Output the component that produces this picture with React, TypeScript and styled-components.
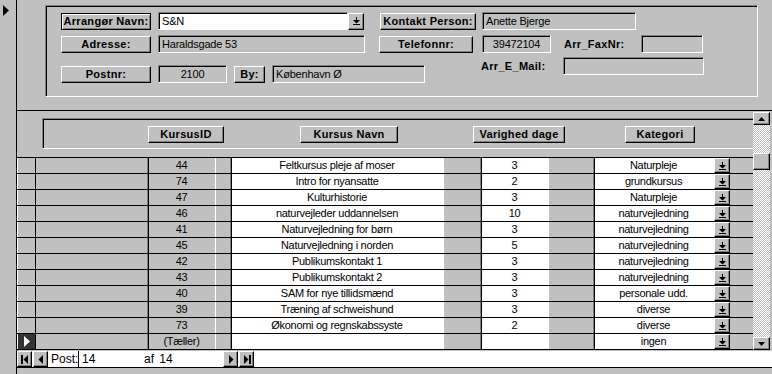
import React from 'react';
import styled, { createGlobalStyle } from 'styled-components';

const GlobalStyle = createGlobalStyle`
  html, body {
    margin: 0;
    padding: 0;
    background: #c0c0c0;
  }
  body {
    font-family: "Liberation Sans", Arial, sans-serif;
    font-size: 11px;
    color: #000;
  }
`;

const Window = styled.div`
  display: flex;
  width: 772px;
  height: 374px;
  overflow: hidden;
  background: #c0c0c0;
`;

const SelectorStrip = styled.div`
  width: 17px;
  flex: none;
  box-sizing: border-box;
  border-right: 1px solid #000;
  padding: 5px 0 0 3px;
`;

const Main = styled.div`
  flex: 1;
  display: flex;
  flex-direction: column;
`;

const HeaderSection = styled.div`
  height: 111px;
  box-sizing: border-box;
  border-bottom: 1px solid #000;
  padding: 5px 0 0 28px;
`;

const Frame = styled.div`
  width: 713px;
  height: 92px;
  box-sizing: border-box;
  border: 1px solid;
  border-color: #808080 #fff #fff #808080;
  box-shadow: inset 1px 1px 0 #000;
  padding: 6px 0 0 15px;
`;

const FormRow = styled.div<{ $mt?: number; $h?: number; $top?: boolean }>`
  display: flex;
  align-items: ${(p) => (p.$top ? 'flex-start' : 'center')};
  height: ${(p) => p.$h ?? 18}px;
  margin-top: ${(p) => p.$mt ?? 0}px;
`;

const Group = styled.div<{ $mt?: number }>`
  display: flex;
  align-items: center;
  height: 18px;
  margin-top: ${(p) => p.$mt ?? 0}px;
`;

const raised = `
  box-sizing: border-box;
  background: #c0c0c0;
  border: 1px solid;
  border-color: #fff #000 #000 #fff;
  box-shadow: inset -1px -1px 0 #808080;
`;

const LabelButton = styled.div<{ $w: number; $ml?: number; $focus?: boolean }>`
  ${raised}
  width: ${(p) => p.$w}px;
  height: 17px;
  margin-left: ${(p) => p.$ml ?? 0}px;
  font-weight: bold;
  letter-spacing: 0.3px;
  text-align: center;
  line-height: 15px;
  white-space: nowrap;
  ${(p) =>
    p.$focus &&
    `
    border-color: #000;
    box-shadow: inset 1px 1px 0 #fff, inset -1px -1px 0 #808080;
  `}
`;

const Field = styled.div<{ $w: number; $ml?: number; $white?: boolean; $center?: boolean }>`
  box-sizing: border-box;
  width: ${(p) => p.$w}px;
  height: 18px;
  margin-left: ${(p) => p.$ml ?? 0}px;
  background: ${(p) => (p.$white ? '#fff' : '#c0c0c0')};
  border: 1px solid;
  border-color: #808080 #fff #fff #808080;
  box-shadow: inset 1px 1px 0 #000;
  padding: 0 3px;
  line-height: 16px;
  letter-spacing: -0.2px;
  text-align: ${(p) => (p.$center ? 'center' : 'left')};
  white-space: nowrap;
  overflow: hidden;
`;

const FieldLabel = styled.div<{ $w: number; $ml?: number }>`
  width: ${(p) => p.$w}px;
  margin-left: ${(p) => p.$ml ?? 0}px;
  font-weight: bold;
  letter-spacing: 0.3px;
  line-height: 18px;
  white-space: nowrap;
`;

const DropButton = styled.div<{ $h: number }>`
  ${raised}
  width: 16px;
  height: ${(p) => p.$h}px;
  flex: none;
  display: flex;
  align-items: center;
  justify-content: center;
`;

const Body = styled.div`
  display: flex;
  height: 239px;
`;

const TableArea = styled.div`
  width: 736px;
  display: flex;
  flex-direction: column;
`;

const ColumnBand = styled.div`
  height: 46px;
  box-sizing: border-box;
  padding: 7px 0 0 25px;
`;

const ColumnFrame = styled.div`
  display: flex;
  height: 31px;
  box-sizing: border-box;
  border-top: 1px solid #808080;
  border-left: 1px solid #808080;
  border-bottom: 1px solid #fff;
  box-shadow: inset 1px 1px 0 #000;
  padding: 7px 0 0 105px;
`;

const Rows = styled.div`
  border-bottom: 1px solid #000;
`;

const GridRow = styled.div`
  display: flex;
  height: 16px;
  box-sizing: border-box;
  border-top: 1px solid #000;
`;

const RecordSelector = styled.div<{ $current?: boolean }>`
  width: 19px;
  height: 15px;
  box-sizing: border-box;
  border-left: 1px solid #fff;
  border-right: 1px solid #000;
  background: ${(p) => (p.$current ? '#333' : '#c0c0c0')};
  display: flex;
  align-items: center;
  justify-content: center;
`;

const Cell = styled.div<{ $w: number; $ml: number; $white?: boolean }>`
  box-sizing: border-box;
  width: ${(p) => p.$w}px;
  height: 15px;
  margin-left: ${(p) => p.$ml}px;
  background: ${(p) => (p.$white ? '#fff' : '#c0c0c0')};
  border-left: 1px solid #808080;
  border-right: 1px solid #fff;
  box-shadow: inset 1px 0 0 #000;
  text-align: center;
  line-height: 15px;
  letter-spacing: -0.3px;
  white-space: nowrap;
  overflow: hidden;
`;

const ScrollBar = styled.div`
  width: 17px;
  height: 238px;
  margin-top: 1px;
  display: flex;
  flex-direction: column;
`;

const ScrollButton = styled.div`
  ${raised}
  height: 13px;
  display: flex;
  align-items: center;
  justify-content: center;
`;

const Track = styled.div`
  flex: 1;
  background-color: #fff;
  background-image: repeating-conic-gradient(#c0c0c0 0 25%, #fff 0 50%);
  background-size: 2px 2px;
`;

const Thumb = styled.div`
  ${raised}
  height: 17px;
  margin-top: 28px;
`;

const NavBar = styled.div`
  display: flex;
  height: 17px;
  margin-top: 1px;
  box-sizing: border-box;
  border-bottom: 1px solid #000;
  background: #fff;
`;

const NavButton = styled.div<{ $ml?: number }>`
  ${raised}
  width: 15px;
  height: 16px;
  margin-left: ${(p) => p.$ml ?? 0}px;
  display: flex;
  align-items: center;
  justify-content: center;
`;

const NavText = styled.div<{ $w: number; $line?: boolean }>`
  width: ${(p) => p.$w}px;
  box-sizing: border-box;
  padding-left: 3px;
  line-height: 16px;
  font-size: 12px;
  word-spacing: 2px;
  border-left: ${(p) => (p.$line ? '1px solid #000' : 'none')};
`;

const ComboArrow = () => (
  <svg width="7" height="8" viewBox="0 0 7 8">
    <path d="M3 0h1v3h3L3.5 6.5 0 3h3z" fill="#000" />
    <rect x="0" y="7" width="7" height="1" fill="#000" />
  </svg>
);

const RightTriangle = ({ color }: { color: string }) => (
  <svg width="6" height="11" viewBox="0 0 6 11">
    <path d="M0 0L6 5.5 0 11z" fill={color} />
  </svg>
);

const NavIcon = ({ dir, bar }: { dir: 'left' | 'right'; bar?: boolean }) => (
  <svg width="8" height="9" viewBox="0 0 8 9">
    {dir === 'left' ? (
      <>
        {bar && <rect x="0" y="0" width="2" height="9" fill="#000" />}
        <path d={bar ? 'M7 0v9L2.5 4.5z' : 'M6 0v9L1.5 4.5z'} fill="#000" />
      </>
    ) : (
      <>
        <path d={bar ? 'M1 0v9L5.5 4.5z' : 'M2 0v9L6.5 4.5z'} fill="#000" />
        {bar && <rect x="6" y="0" width="2" height="9" fill="#000" />}
      </>
    )}
  </svg>
);

const ScrollArrow = ({ up }: { up?: boolean }) => (
  <svg width="7" height="4" viewBox="0 0 7 4">
    <path d={up ? 'M0 4h7L3.5 0z' : 'M0 0h7L3.5 4z'} fill="#000" />
  </svg>
);

type Course = { id: string; name: string; days: string; category: string };

const courses: Course[] = [
  { id: '44', name: 'Feltkursus pleje af moser', days: '3', category: 'Naturpleje' },
  { id: '74', name: 'Intro for nyansatte', days: '2', category: 'grundkursus' },
  { id: '47', name: 'Kulturhistorie', days: '3', category: 'Naturpleje' },
  { id: '46', name: 'naturvejleder uddannelsen', days: '10', category: 'naturvejledning' },
  { id: '41', name: 'Naturvejledning for børn', days: '3', category: 'naturvejledning' },
  { id: '45', name: 'Naturvejledning i norden', days: '5', category: 'naturvejledning' },
  { id: '42', name: 'Publikumskontakt 1', days: '3', category: 'naturvejledning' },
  { id: '43', name: 'Publikumskontakt 2', days: '3', category: 'naturvejledning' },
  { id: '40', name: 'SAM for nye tillidsmænd', days: '3', category: 'personale udd.' },
  { id: '39', name: 'Træning af schweishund', days: '3', category: 'diverse' },
  { id: '73', name: 'Økonomi og regnskabssyste', days: '2', category: 'diverse' },
];

const CourseRow = ({ course, current }: { course: Course; current?: boolean }) => (
  <GridRow>
    <RecordSelector $current={current}>
      {current && <RightTriangle color="#fff" />}
    </RecordSelector>
    <Cell $w={69} $ml={111}>{course.id}</Cell>
    <Cell $w={214} $ml={14} $white>{course.name}</Cell>
    <Cell $w={69} $ml={36} $white>{course.days}</Cell>
    <Cell $w={121} $ml={44} $white>{course.category}</Cell>
    <DropButton $h={15}>
      <ComboArrow />
    </DropButton>
  </GridRow>
);

export default function App() {
  return (
    <>
      <GlobalStyle />
      <Window>
        <SelectorStrip>
          <RightTriangle color="#000" />
        </SelectorStrip>
        <Main>
          <HeaderSection>
            <Frame>
              <FormRow>
                <LabelButton $w={90} $focus>Arrangør Navn:</LabelButton>
                <Field $w={190} $ml={7} $white>S&amp;N</Field>
                <DropButton $h={17}>
                  <ComboArrow />
                </DropButton>
                <LabelButton $w={96} $ml={16}>Kontakt Person:</LabelButton>
                <Field $w={154} $ml={6}>Anette Bjerge</Field>
              </FormRow>
              <FormRow $mt={5}>
                <LabelButton $w={90}>Adresse:</LabelButton>
                <Field $w={207} $ml={7}>Haraldsgade 53</Field>
                <LabelButton $w={94} $ml={14}>Telefonnr:</LabelButton>
                <Field $w={69} $ml={9} $center>39472104</Field>
                <FieldLabel $w={77} $ml={13}>Arr_FaxNr:</FieldLabel>
                <Field $w={62} />
              </FormRow>
              <FormRow $mt={4} $h={26} $top>
                <Group $mt={8}>
                  <LabelButton $w={90}>Postnr:</LabelButton>
                  <Field $w={69} $ml={7} $center>2100</Field>
                  <LabelButton $w={31} $ml={7}>By:</LabelButton>
                  <Field $w={153} $ml={7}>København Ø</Field>
                </Group>
                <Group>
                  <FieldLabel $w={82} $ml={56}>Arr_E_Mail:</FieldLabel>
                  <Field $w={141} />
                </Group>
              </FormRow>
            </Frame>
          </HeaderSection>

          <Body>
            <TableArea>
              <ColumnBand>
                <ColumnFrame>
                  <LabelButton $w={76}>KursusID</LabelButton>
                  <LabelButton $w={98} $ml={76}>Kursus Navn</LabelButton>
                  <LabelButton $w={92} $ml={75}>Varighed dage</LabelButton>
                  <LabelButton $w={70} $ml={60}>Kategori</LabelButton>
                </ColumnFrame>
              </ColumnBand>
              <Rows>
                {courses.map((c) => (
                  <CourseRow key={c.id} course={c} />
                ))}
                <CourseRow current course={{ id: '(Tæller)', name: '', days: '', category: 'ingen' }} />
              </Rows>
            </TableArea>
            <ScrollBar>
              <ScrollButton>
                <ScrollArrow up />
              </ScrollButton>
              <Track>
                <Thumb />
              </Track>
              <ScrollButton>
                <ScrollArrow />
              </ScrollButton>
            </ScrollBar>
          </Body>

          <NavBar>
            <NavButton>
              <NavIcon dir="left" bar />
            </NavButton>
            <NavButton $ml={1}>
              <NavIcon dir="left" />
            </NavButton>
            <NavText $w={30}>Post:</NavText>
            <NavText $w={63} $line>14</NavText>
            <NavText $w={82}>af 14</NavText>
            <NavButton>
              <NavIcon dir="right" />
            </NavButton>
            <NavButton $ml={1}>
              <NavIcon dir="right" bar />
            </NavButton>
          </NavBar>
        </Main>
      </Window>
    </>
  );
}
